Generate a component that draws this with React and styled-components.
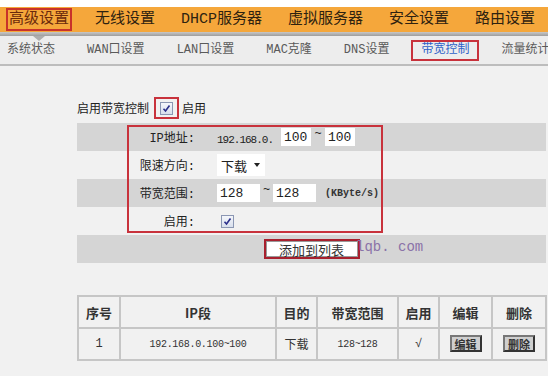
import React from 'react';
import styled, { createGlobalStyle } from 'styled-components';

const GlobalStyle = createGlobalStyle`
  html, body { margin: 0; padding: 0; background: #f1f1f1; }
  body {
    font-family: "Liberation Mono", "Noto Sans CJK SC", monospace;
    color: #222;
  }
`;

const Page = styled.div`
  position: relative;
  width: 548px;
  height: 376px;
  overflow: hidden;
  background: #f1f1f1;
`;

const TopGap = styled.div`
  height: 7px;
  background: #fff;
`;

const MainNav = styled.nav`
  height: 25px;
  background: #f5a73b;
  display: flex;
  align-items: center;
  gap: 20px;
  padding-left: 6px;
  white-space: nowrap;
`;

const MainItem = styled.span`
  flex-shrink: 0;
  font-size: 15px;
  line-height: 19px;
  padding: 0 1px;
  border: 2px solid ${p => (p.$active ? '#c8322a' : 'transparent')};
  color: ${p => (p.$active ? '#6b2a0c' : '#2e2210')};
`;

const NavDivider = styled.div`
  position: relative;
  height: 4px;
  background: linear-gradient(#c8c8c8, #9e9e9e);

  &::after {
    content: '';
    position: absolute;
    left: 33px;
    top: 4px;
    border-left: 6px solid transparent;
    border-right: 6px solid transparent;
    border-top: 5px solid #aeaeae;
  }
`;

const SubNav = styled.nav`
  height: 28px;
  background: #ededed;
  border-bottom: 2px solid #bdbdbd;
  display: flex;
  align-items: center;
  gap: 32px;
  padding-left: 7px;
  white-space: nowrap;
  overflow: hidden;
`;

const SubItem = styled.span`
  flex-shrink: 0;
  font-size: 12px;
  line-height: 17px;
  padding: 0 ${p => (p.$active ? '8px' : '0')};
  margin: 0 ${p => (p.$active ? '-10px' : '0')};
  color: ${p => (p.$active ? '#2f62c8' : '#5a5a5a')};
  border: ${p => (p.$active ? '2px solid #c8323c' : 'none')};
`;

const Content = styled.div`
  padding: 31px 2px 0 77px;
`;

const EnableRow = styled.div`
  display: flex;
  align-items: center;
  height: 22px;
  margin-bottom: 4px;
  font-size: 12px;
  color: #222;
`;

const CheckFrame = styled.span`
  display: inline-flex;
  align-items: center;
  justify-content: center;
  box-sizing: border-box;
  width: 25px;
  height: 22px;
  margin: 0 3px 0 5px;
  border: 2px solid #c8323c;
`;

const Box = styled.span`
  display: inline-flex;
  align-items: center;
  justify-content: center;
  box-sizing: border-box;
  width: 13px;
  height: 13px;
  border: 1px solid #8b97b3;
  background: linear-gradient(#f4f6fb, #d8dfec);
`;

const Check = () => (
  <Box>
    <svg width="9" height="9" viewBox="0 0 9 9">
      <polyline points="1.5,4.8 3.5,7 7.5,1.5" fill="none" stroke="#2b2f8a" strokeWidth="1.6" />
    </svg>
  </Box>
);

const Form = styled.div`
  position: relative;
`;

const FormRow = styled.div`
  display: grid;
  grid-template-columns: 118px 1fr;
  height: 28px;
  align-items: center;
  background: ${p => (p.$shade ? '#d5d5d5' : 'transparent')};
`;

const Label = styled.span`
  text-align: right;
  font-size: 12px;
  color: #222;
`;

const Value = styled.div`
  display: flex;
  align-items: center;
  padding-left: ${p => p.$indent || 22}px;
  font-size: 13px;
`;

const SmallNum = styled.span`
  font-size: 11px;
  letter-spacing: -1px;
  margin-top: 5px;
  margin-right: 8px;
`;

const TextInput = styled.span`
  display: inline-flex;
  align-items: center;
  box-sizing: border-box;
  width: ${p => p.$w}px;
  height: 18px;
  padding-left: 3px;
  background: #fff;
  font-size: 13px;
  color: #222;
`;

const Tilde = styled.span`
  width: ${p => p.$w || 14}px;
  text-align: center;
  font-size: 12px;
  margin-top: -6px;
`;

const Unit = styled.span`
  margin-left: 9px;
  font-size: 10px;
  font-weight: bold;
  color: #333;
`;

const Select = styled.span`
  display: inline-flex;
  align-items: center;
  gap: 7px;
  box-sizing: border-box;
  width: 48px;
  height: 22px;
  padding-left: 4px;
  background: #fff;
  font-size: 13px;

  &::after {
    content: '';
    border-left: 3px solid transparent;
    border-right: 3px solid transparent;
    border-top: 4px solid #222;
  }
`;

const ButtonRow = styled(FormRow)`
  display: flex;
  justify-content: center;
`;

const ButtonFrame = styled.span`
  display: inline-flex;
  box-sizing: border-box;
  width: 96px;
  height: 20px;
  border: 2px solid #a8202e;
`;

const AddButton = styled.span`
  flex: 1;
  display: flex;
  align-items: center;
  justify-content: center;
  background: #fff;
  border: 1px solid #999;
  font-size: 13px;
  color: #333;
`;

const Highlight = styled.div`
  position: absolute;
  left: 50px;
  top: 2px;
  width: 256px;
  height: 108px;
  box-sizing: border-box;
  border: 2px solid #c8323c;
  pointer-events: none;
`;

const Watermark = styled.span`
  position: absolute;
  left: 356px;
  top: 239px;
  font-size: 14px;
  color: #8a72a8;
  white-space: pre;
`;

const Table = styled.table`
  margin-top: 32px;
  width: 468px;
  border-collapse: collapse;
  table-layout: fixed;
`;

const Col = styled.col`
  width: ${p => p.$w}px;
`;

const Th = styled.th`
  height: 30px;
  padding: 0;
  border: 2px solid #c6c6c6;
  font-family: "Noto Sans CJK SC", sans-serif;
  font-size: 13px;
  font-weight: bold;
  color: #333;
`;

const Td = styled.td`
  height: 30px;
  padding: 0;
  border: 2px solid #c6c6c6;
  text-align: center;
  font-size: ${p => (p.$small ? '10px' : '12px')};
  letter-spacing: ${p => (p.$small ? '-0.3px' : '0')};
  color: #333;
`;

const CellButton = styled.span`
  display: inline-flex;
  align-items: center;
  justify-content: center;
  box-sizing: border-box;
  width: 32px;
  height: 17px;
  background: #cfcfcf;
  border: 2px solid;
  border-color: #777 #333 #333 #777;
  font-family: "Noto Sans CJK SC", sans-serif;
  font-size: 11px;
  font-weight: bold;
  color: #333;
`;

const BottomBar = styled.div`
  display: flex;
  justify-content: center;
  gap: 28px;
  margin-top: 17px;
`;

const BottomButton = styled.span`
  box-sizing: border-box;
  width: 58px;
  height: 22px;
  background: #f4f4f4;
  border: ${p => (p.$red ? '3px solid #b8282e' : '2px solid #aaa')};
`;

const mainItems = ['高级设置', '无线设置', 'DHCP服务器', '虚拟服务器', '安全设置', '路由设置'];
const subItems = ['系统状态', 'WAN口设置', 'LAN口设置', 'MAC克隆', 'DNS设置', '带宽控制', '流量统计'];

const columns = [
  ['序号', 42],
  ['IP段', 156],
  ['目的', 41],
  ['带宽范围', 81],
  ['启用', 41],
  ['编辑', 53],
  ['删除', 54],
];

export default function App() {
  return (
    <Page>
      <GlobalStyle />
      <TopGap />
      <MainNav>
        {mainItems.map((t, i) => (
          <MainItem key={t} $active={i === 0}>{t}</MainItem>
        ))}
      </MainNav>
      <NavDivider />
      <SubNav>
        {subItems.map(t => (
          <SubItem key={t} $active={t === '带宽控制'}>{t}</SubItem>
        ))}
      </SubNav>

      <Content>
        <EnableRow>
          启用带宽控制
          <CheckFrame><Check /></CheckFrame>
          启用
        </EnableRow>

        <Form>
          <FormRow $shade>
            <Label>IP地址:</Label>
            <Value>
              <SmallNum>192.168.0.</SmallNum>
              <TextInput $w={30}>100</TextInput>
              <Tilde>~</Tilde>
              <TextInput $w={30}>100</TextInput>
            </Value>
          </FormRow>
          <FormRow>
            <Label>限速方向:</Label>
            <Value>
              <Select>下载</Select>
            </Value>
          </FormRow>
          <FormRow $shade>
            <Label>带宽范围:</Label>
            <Value>
              <TextInput $w={43}>128</TextInput>
              <Tilde $w={13}>~</Tilde>
              <TextInput $w={43}>128</TextInput>
              <Unit>(KByte/s)</Unit>
            </Value>
          </FormRow>
          <FormRow>
            <Label>启用:</Label>
            <Value $indent={26}>
              <Check />
            </Value>
          </FormRow>
          <ButtonRow $shade>
            <ButtonFrame>
              <AddButton>添加到列表</AddButton>
            </ButtonFrame>
          </ButtonRow>
          <Highlight />
        </Form>

        <Table>
          <colgroup>
            {columns.map(([t, w]) => (
              <Col key={t} $w={w} />
            ))}
          </colgroup>
          <thead>
            <tr>
              {columns.map(([t]) => (
                <Th key={t}>{t}</Th>
              ))}
            </tr>
          </thead>
          <tbody>
            <tr>
              <Td>1</Td>
              <Td $small>192.168.0.100~100</Td>
              <Td>下载</Td>
              <Td $small>128~128</Td>
              <Td>√</Td>
              <Td><CellButton>编辑</CellButton></Td>
              <Td><CellButton>删除</CellButton></Td>
            </tr>
          </tbody>
        </Table>

        <BottomBar>
          <BottomButton $red />
          <BottomButton />
        </BottomBar>
      </Content>
      <Watermark>lqb. com</Watermark>
    </Page>
  );
}
